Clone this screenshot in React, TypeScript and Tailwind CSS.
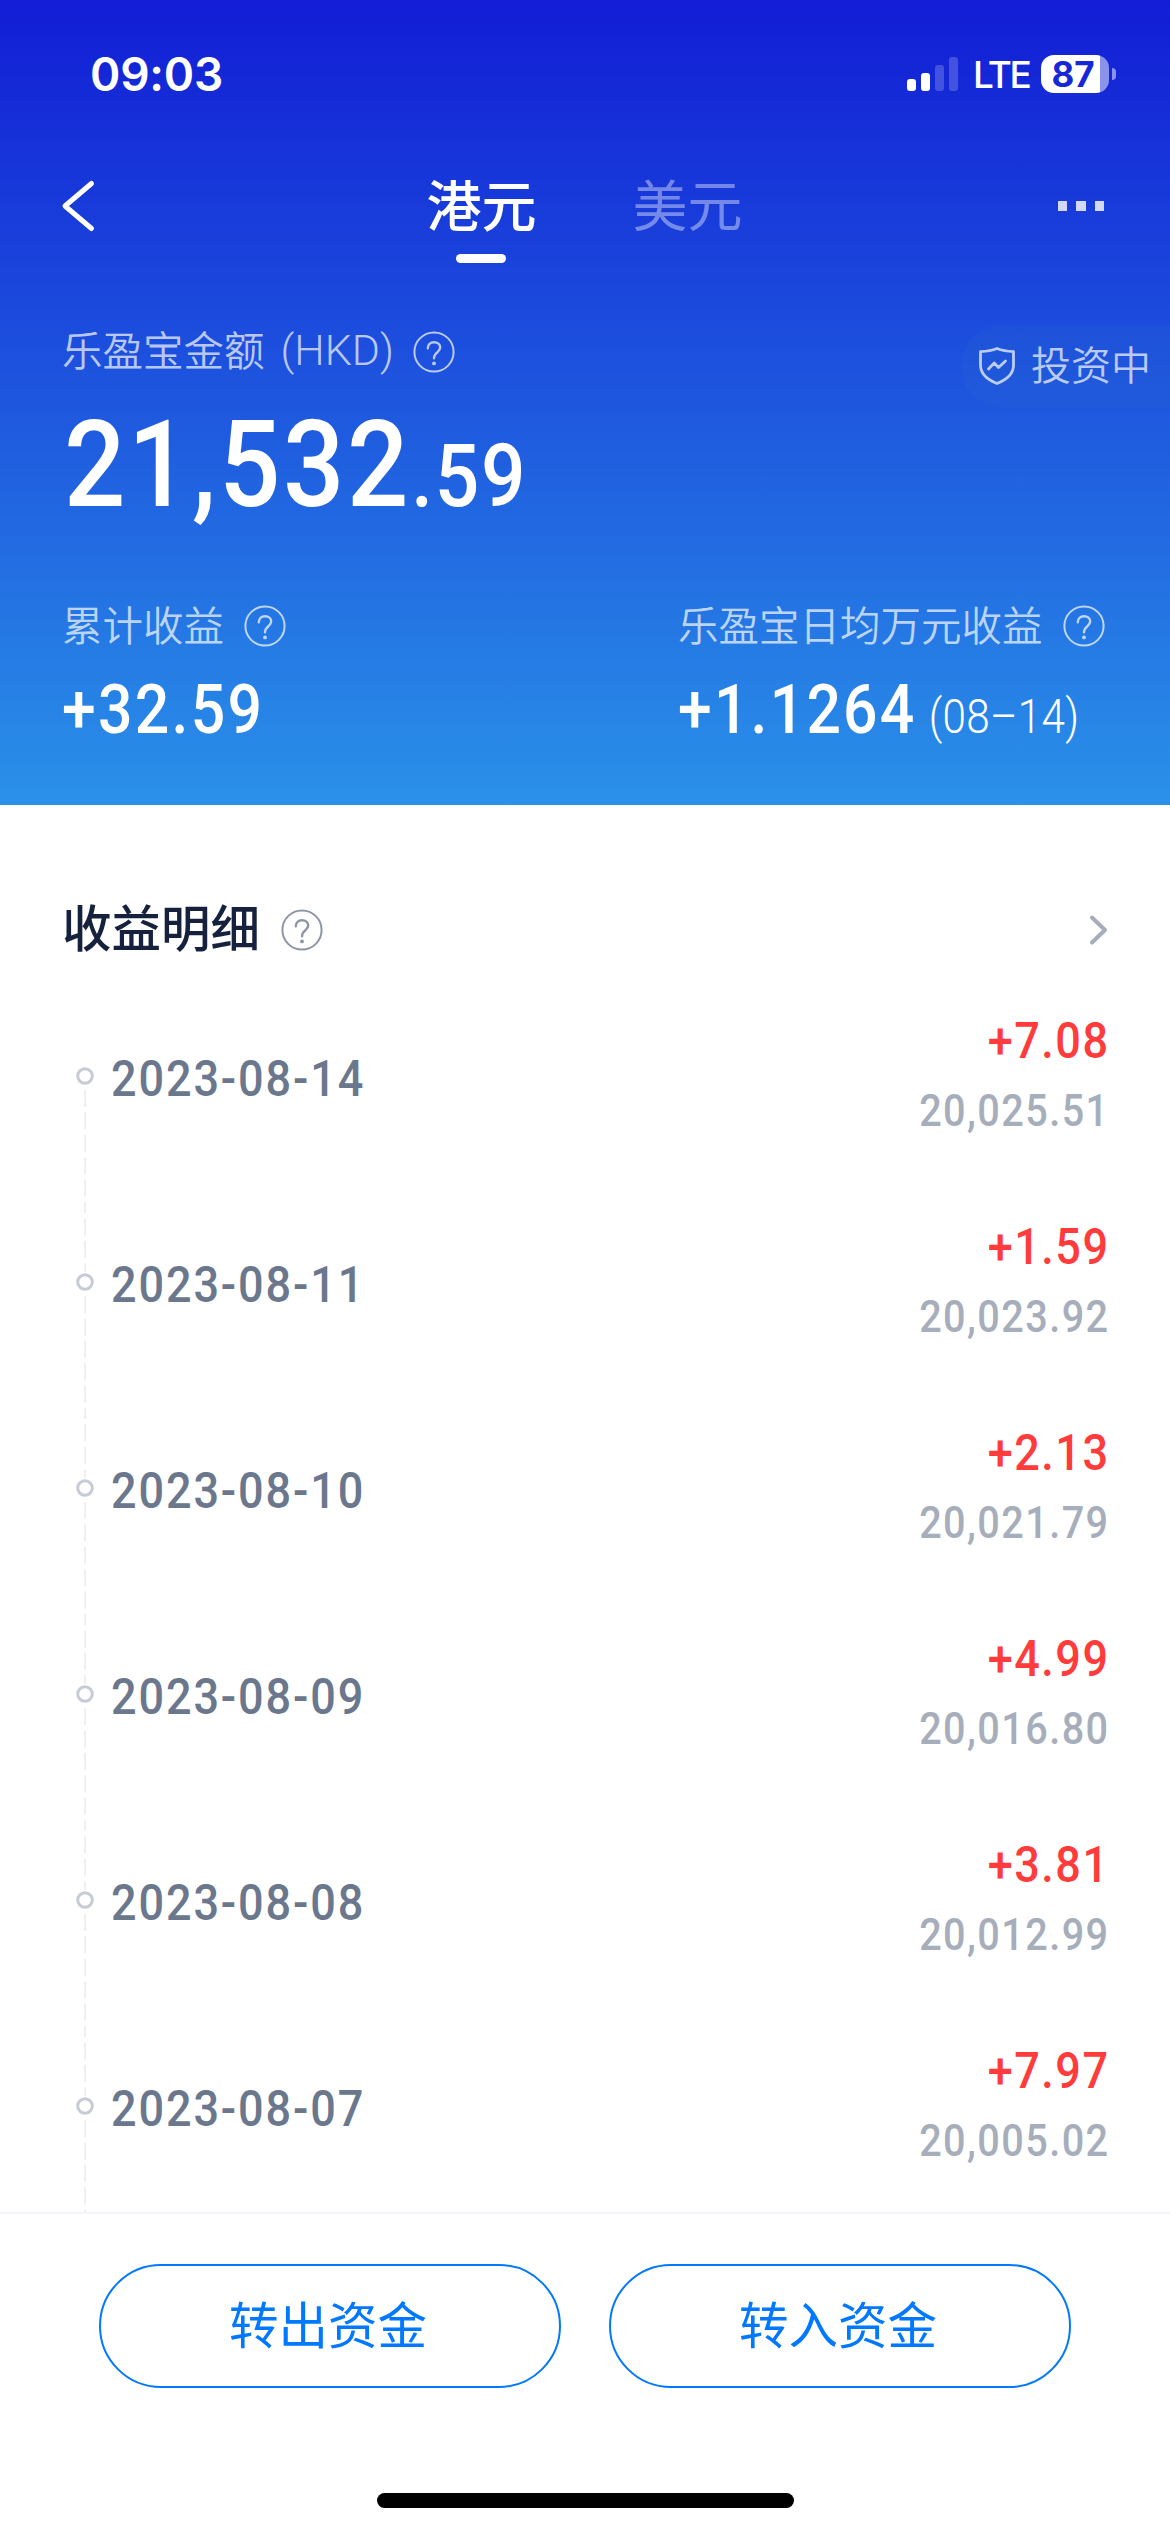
import React from 'react';

// --- Data ---
const records = [
  { date: '2023-08-14', gain: '+7.08', total: '20,025.51' },
  { date: '2023-08-11', gain: '+1.59', total: '20,023.92' },
  { date: '2023-08-10', gain: '+2.13', total: '20,021.79' },
  { date: '2023-08-09', gain: '+4.99', total: '20,016.80' },
  { date: '2023-08-08', gain: '+3.81', total: '20,012.99' },
  { date: '2023-08-07', gain: '+7.97', total: '20,005.02' },
];

// --- Icons ---
const HelpIcon = ({ className }: { className?: string }) => (
  <svg className={className} width="42" height="42" viewBox="0 0 42 42" fill="none" stroke="currentColor">
    <circle cx="21" cy="21" r="19.6" strokeWidth="2" />
    <path d="M14.8 17.2C14.8 13.4 17.4 11.2 21 11.2C24.6 11.2 27.2 13.4 27.2 16.6C27.2 21.4 21 21.6 21 27.2" strokeWidth="2.4" strokeLinecap="round" />
    <circle cx="21" cy="32.4" r="1.9" fill="currentColor" stroke="none" />
  </svg>
);

const SignalIcon = () => (
  <svg width="52" height="36" viewBox="0 0 52 36" fill="#fff">
    <rect x="0" y="23" width="9" height="12" rx="3" />
    <rect x="14" y="17" width="9" height="18" rx="3" />
    <rect x="28" y="9" width="9" height="26" rx="3" opacity="0.2" />
    <rect x="42" y="1" width="9" height="34" rx="3" opacity="0.2" />
  </svg>
);

const ShieldIcon = () => (
  <svg width="38" height="40" viewBox="0 0 38 40" fill="none" stroke="currentColor" strokeWidth="2.8" strokeLinejoin="round" strokeLinecap="round">
    <path d="M19 2.5C14 4.6 8 5.4 2.5 5.6V19C2.5 27.5 9.5 33.8 19 37.5C28.5 33.8 35.5 27.5 35.5 19V5.6C30 5.4 24 4.6 19 2.5Z" />
    <path d="M10.5 23L16.2 17L20.5 21.5L27.5 15" />
  </svg>
);

const TimelineMark = ({ first }: { first: boolean }) => (
  <svg width="18" height="206" viewBox="0 0 18 206" fill="none" className="shrink-0">
    {!first && <path d="M9 0V66" stroke="#efeff1" strokeWidth="2" strokeDasharray="17 5.4" strokeDashoffset="10" />}
    <path d="M9 88V206" stroke="#efeff1" strokeWidth="2" strokeDasharray="17 5.4" strokeDashoffset="-2" />
    <circle cx="9" cy="76" r="7.3" stroke="#c6cbd6" strokeWidth="3" />
  </svg>
);

export default function App() {
  return (
    <div className="flex h-[2532px] w-[1170px] flex-col overflow-hidden bg-white font-['Roboto','Noto_Sans_CJK_SC',sans-serif]">

      {/* --- Header --- */}
      <header className="flex h-[805px] shrink-0 flex-col bg-linear-to-b/srgb from-[#121dd5] to-[#2a91e8] text-white">

        {/* Status bar */}
        <div className="flex h-[148px] shrink-0 items-center justify-between pl-[90px] pr-[54px] font-['Inter',sans-serif]">
          <span className="text-[46px] font-semibold leading-none tracking-[-0.2px]">09:03</span>
          <div className="flex items-center">
            <SignalIcon />
            <span className="ml-[14px] w-[54px] text-[37px] font-medium leading-none tracking-[-2.6px]">LTE</span>
            <div className="ml-[14px] flex h-[38px] w-[68px] items-center justify-center rounded-[13px] bg-linear-to-r from-white from-[87%] to-white/50 to-[87%] pr-1">
              <span className="text-[35px] font-bold leading-none text-[#1727d8]">87</span>
            </div>
            <div className="ml-[3px] h-3 w-1 rounded-r-full bg-white/50" />
          </div>
        </div>

        {/* Navigation */}
        <nav className="flex h-[116px] shrink-0 items-center justify-between pl-[60px] pr-[66px]">
          <svg width="36" height="54" viewBox="0 0 36 54" fill="none" stroke="#fff" strokeWidth="5" strokeLinecap="round" strokeLinejoin="round">
            <path d="M31.5 4.5L5 27L31.5 49.5" />
          </svg>
          <div className="flex h-full gap-[96px] pl-[15px] text-[55px] leading-[119px]">
            <div className="flex flex-col items-center">
              <span className="h-[106px] font-medium">港元</span>
              <span className="h-[9px] w-[50px] rounded-full bg-white" />
            </div>
            <span className="text-white/40">美元</span>
          </div>
          <div className="flex gap-[9px]">
            <span className="h-[10px] w-[9px] bg-white/80" />
            <span className="h-[10px] w-[10px] bg-white/80" />
            <span className="h-[10px] w-[9px] bg-white/80" />
          </div>
        </nav>

        {/* Balance */}
        <div className="flex h-[143px] shrink-0 items-start justify-between pl-[62px] pt-[61px]">
          <div className="flex items-center pt-1 text-[40.5px] leading-none text-white/70">
            <span className="font-[350]">乐盈宝金额</span>
            <span className="ml-4 pb-[3px] text-[43px] font-[350]">(HKD)</span>
            <HelpIcon className="ml-[19px]" />
          </div>
          <div className="flex h-[82px] w-[209px] items-center rounded-l-full bg-[#2a6ad0]/20 pl-[17px] text-[40px] font-[350] leading-none text-white/70">
            <ShieldIcon />
            <span className="ml-[15px] pt-[2px]">投资中</span>
          </div>
        </div>
        <div className="flex h-[180px] shrink-0 origin-left scale-x-[0.9] items-baseline pl-[71px] font-medium leading-[116px] tracking-[3px]">
          <span className="text-[120px]">21,532</span>
          <span className="text-[87px] tracking-[2px]">.59</span>
        </div>

        {/* Earnings summary */}
        <div className="flex pl-[62px]">
          <div className="w-[616px]">
            <div className="flex h-[78px] items-center text-[40.5px] font-[350] leading-none text-white/70">
              <span className="pt-[3px]">累计收益</span>
              <HelpIcon className="ml-5" />
            </div>
            <div className="origin-left scale-x-[0.88] text-[69px] font-medium leading-[90px] tracking-[2.6px]">+32.59</div>
          </div>
          <div>
            <div className="flex h-[78px] items-center text-[40.5px] font-[350] leading-none text-white/70">
              <span className="pt-[3px]">乐盈宝日均万元收益</span>
              <HelpIcon className="ml-5" />
            </div>
            <div className="flex origin-left scale-x-[0.88] items-baseline text-[69px] font-medium leading-[90px] tracking-[2.5px]">
              +1.1264
              <span className="ml-[14px] text-[48px] font-[350] tracking-[0.3px]">(08–14)</span>
            </div>
          </div>
        </div>
      </header>

      {/* --- Earnings detail --- */}
      <section className="flex h-[1407px] shrink-0 flex-col overflow-hidden">
        <div className="flex h-[195px] shrink-0 items-center justify-between pl-[62px] pr-[59px] pt-[54px]">
          <div className="flex items-center">
            <h2 className="pt-[3px] text-[49.5px] font-medium leading-none text-[#15213d]">收益明细</h2>
            <HelpIcon className="ml-[21px] text-[#8d95a5]" />
          </div>
          <svg width="24" height="34" viewBox="0 0 24 34" fill="none" stroke="#a6adba" strokeWidth="4" strokeLinecap="round" strokeLinejoin="round">
            <path d="M5 4.5L18 17L5 29.5" />
          </svg>
        </div>

        {records.map((r, i) => (
          <div key={r.date} className="flex h-[206px] shrink-0 pl-[76px] pr-[60px]">
            <TimelineMark first={i === 0} />
            <span className="ml-[17px] origin-left scale-x-90 pt-[54px] text-[50px] font-medium leading-[50px] tracking-[2.1px] text-[#6b778c]">{r.date}</span>
            <div className="ml-auto flex origin-right scale-x-90 flex-col items-end">
              <span className="pt-4 text-[50px] font-medium leading-[50px] tracking-[1.7px] text-[#ff3b3b]">{r.gain}</span>
              <span className="pt-[22px] text-[44px] font-[460] leading-[46px] tracking-[1.6px] text-[#a6aebb]">{r.total}</span>
            </div>
          </div>
        ))}
      </section>

      {/* --- Bottom actions --- */}
      <footer className="flex flex-1 flex-col items-center justify-between border-t-2 border-[#f4f5fa] pb-6 pt-[50px]">
        <div className="flex gap-12">
          <button className="h-[124px] w-[462px] rounded-full border-2 border-[#0078ff] pr-1 pt-1 text-[49.5px] leading-none text-[#0078ff]">转出资金</button>
          <button className="h-[124px] w-[462px] rounded-full border-2 border-[#0078ff] pr-1 pt-1 text-[49.5px] leading-none text-[#0078ff]">转入资金</button>
        </div>
        <div className="h-[15px] w-[417px] rounded-full bg-black" />
      </footer>
    </div>
  );
}
